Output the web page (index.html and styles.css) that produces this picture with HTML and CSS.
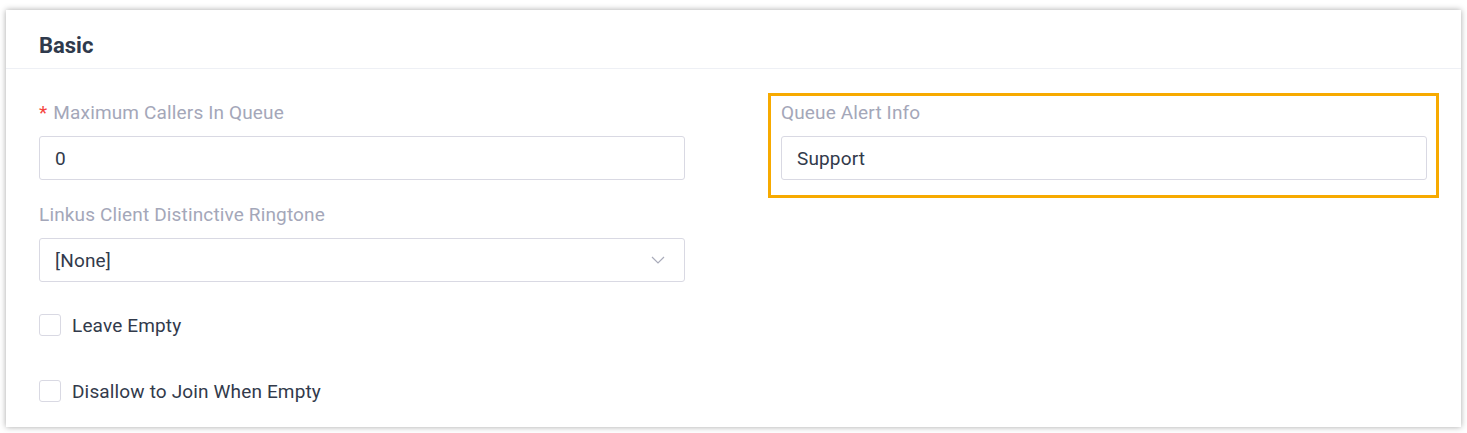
FILE: index.html
```html
<!DOCTYPE html>
<html>
    <head>
        <meta charset="utf-8">
        <title>Basic</title>
        <link rel="stylesheet" href="styles.css">
    </head>
    <body>
        <div class="card">
            <div class="card-header">
                <h2>Basic</h2>
            </div>
            <div class="card-body">
                <div class="col">
                    <div class="form-item">
                        <label class="form-label"><span class="required">*</span>Maximum Callers In Queue</label>
                        <div class="input">0</div>
                    </div>
                    <div class="form-item">
                        <label class="form-label">Linkus Client Distinctive Ringtone</label>
                        <div class="input select">
                            <span>[None]</span>
                            <svg class="arrow" width="14" height="8" viewBox="0 0 14 8"><path d="M1 1l6 6 6-6" fill="none" stroke="#a9abba" stroke-width="1.2"/></svg>
                        </div>
                    </div>
                    <div class="check-row">
                        <span class="checkbox"></span>
                        <span>Leave Empty</span>
                    </div>
                    <div class="check-row">
                        <span class="checkbox"></span>
                        <span>Disallow to Join When Empty</span>
                    </div>
                </div>
                <div class="col">
                    <div class="form-item highlight">
                        <label class="form-label">Queue Alert Info</label>
                        <div class="input">Support</div>
                    </div>
                </div>
            </div>
        </div>
    </body>
</html>
```

FILE: styles.css
```css
body{
    margin:0;
    background:#fff;
    font-family:Roboto, "Liberation Sans", sans-serif;
    letter-spacing:0.15px;
    color:#323a4b;
}

.card{
    margin:10px 6px 6px 6px;
    background:#fff;
    box-shadow:0 0 6px 0 rgba(0,0,0,0.35);
}

.card-header{
    height:46px;
    padding:12px 33px 0;
    border-bottom:1px solid #eef0f5;
    display:flex;
    align-items:center;
}
.card-header h2{
    margin:0;
    font-size:22px;
    font-weight:700;
    letter-spacing:0;
    color:#2f3a4c;
}

.card-body{
    display:grid;
    grid-template-columns:646px 646px;
    column-gap:96px;
    padding:31px 34px 25px 33px;
}

.form-item{
    margin-bottom:22px;
    position:relative;
}
.form-label{
    display:block;
    font-size:19px;
    line-height:25px;
    color:#a4a7b9;
    margin-bottom:11px;
}
.required{
    color:#f5433c;
    margin-right:6px;
}
.input{
    height:44px;
    box-sizing:border-box;
    border:1px solid #d9d9e3;
    border-radius:3px;
    padding:0 15px;
    display:flex;
    align-items:center;
    font-size:19px;
    color:#323a4b;
}
.select{
    justify-content:space-between;
}
.select .arrow{
    margin-right:4px;
}

.highlight::after{
    content:"";
    position:absolute;
    top:-7px;
    left:-13px;
    right:-12px;
    bottom:-18px;
    border:3px solid #f7aa00;
}

.check-row{
    display:flex;
    align-items:center;
    gap:11px;
    height:22px;
    font-size:19px;
    margin-top:32px;
}
.check-row + .check-row{
    margin-top:44px;
}
.checkbox{
    width:20px;
    height:20px;
    border:1px solid #d9d9e3;
    border-radius:3px;
}
```
